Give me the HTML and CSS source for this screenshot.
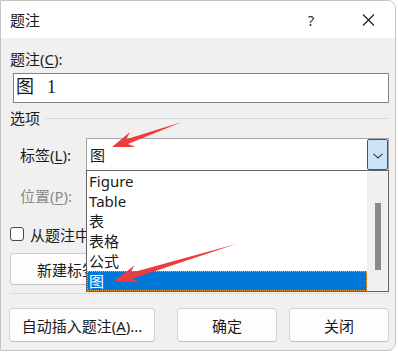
FILE: index.html
```html
<!DOCTYPE html>
<html lang="zh-CN">
<head>
    <meta charset="UTF-8">
    <meta name="viewport" content="width=device-width, initial-scale=1.0">
    <title>题注</title>
    <link rel="stylesheet" href="styles.css">
</head>
<body>
    <div class="window">
        <div class="titlebar">
            <span class="title">题注</span>
            <span class="title-btn help">?</span>
            <span class="title-btn close">
                <svg width="13" height="12" viewBox="0 0 13 12">
                    <path d="M1 0.5 L12 11.5 M12 0.5 L1 11.5" stroke="#1a1a1a" stroke-width="1.1" fill="none"/>
                </svg>
            </span>
        </div>

        <div class="dialog-body">
            <div class="field-label">题注(<u>C</u>):</div>
            <div class="caption-input">图<span class="caption-num">1</span></div>

            <div class="group-head">选项</div>

            <div class="opt-row">
                <span class="opt-label">标签(<u>L</u>):</span>
                <div class="combo">
                    <span class="combo-value">图</span>
                    <span class="combo-btn">
                        <svg width="10" height="6" viewBox="0 0 10 6">
                            <path d="M0.5 0.8 L5 5 L9.5 0.8" stroke="#3c3c3c" stroke-width="1.1" fill="none"/>
                        </svg>
                    </span>
                </div>
            </div>

            <div class="opt-row opt-row-pos">
                <span class="opt-label disabled">位置(<u>P</u>):</span>
                <div class="combo combo-disabled"></div>
            </div>

            <label class="check-row">
                <span class="checkbox"></span>
                <span>从题注中</span>
            </label>

            <div class="tool-row">
                <button class="btn btn-new">新建标签</button>
            </div>

            <div class="separator"></div>

            <div class="action-row">
                <button class="btn btn-auto">自动插入题注(<u>A</u>)...</button>
                <button class="btn btn-ok">确定</button>
                <button class="btn btn-close">关闭</button>
            </div>
        </div>

        <!-- open dropdown of the label combo -->
        <div class="dropdown">
            <ul class="dropdown-items">
                <li>Figure</li>
                <li>Table</li>
                <li>表</li>
                <li>表格</li>
                <li>公式</li>
                <li class="selected">图</li>
            </ul>
            <div class="scroll-track"><div class="scroll-thumb"></div></div>
        </div>

        <!-- red annotation arrows -->
        <svg class="marks" width="398" height="353" viewBox="0 0 398 353">
            <polygon points="182,122 127.9,144.0 135.4,147.1 112,147 130.0,132.1 126.3,139.2" fill="#ef3b3b"/>
            <polygon points="236,244 132.1,278.7 139.6,282.6 114,281 134.4,265.4 130.3,272.9" fill="#ef3b3b"/>
        </svg>
    </div>
</body>
</html>
```

FILE: styles.css
```css
body {
    margin: 0;
    padding: 0;
    background-color: #ffffff;
    font-family: "Noto Sans", "Noto Sans CJK SC", sans-serif;
    font-size: 15px;
    color: #1a1a1a;
}

u {
    text-decoration-thickness: 1px;
    text-underline-offset: 2px;
}

.window {
    position: relative;
    width: 396px;
    height: 351px;
    box-sizing: border-box;
    border: 1px solid #c4c4c4;
    border-radius: 0 8px 8px 0;
    background-color: #f0f0f0;
    overflow: hidden;
}

.titlebar {
    display: flex;
    align-items: center;
    height: 37px;
    background-color: #ffffff;
    padding-left: 9px;
}

.title {
    flex: 1;
    line-height: 20px;
}

.title-btn {
    display: flex;
    align-items: center;
    justify-content: center;
    width: 46px;
    height: 37px;
}

.help {
    font-size: 15px;
    color: #333;
    margin-right: 11px;
}

.close {
    margin-right: 4px;
}

.dialog-body {
    padding-left: 9px;
}

.field-label {
    margin-top: 11px;
    height: 20px;
    line-height: 20px;
}

.caption-input {
    margin: 4px 0 0 3px;
    width: 376px;
    height: 30px;
    box-sizing: border-box;
    border: 1px solid #858585;
    background-color: #fff;
    padding-left: 2px;
    font-family: "Liberation Serif", "Noto Sans CJK SC", serif;
    font-size: 18px;
    line-height: 27px;
}

.caption-num {
    margin-left: 13px;
}

.group-head {
    display: flex;
    align-items: center;
    margin-top: 5px;
    height: 20px;
    line-height: 20px;
}

.group-head::after {
    content: "";
    flex: 1;
    height: 1px;
    background-color: #d9d9d9;
    margin-left: 5px;
    margin-right: 6px;
}

.opt-row {
    display: flex;
    align-items: center;
    margin-top: 10px;
    height: 33px;
}

.opt-row-pos {
    margin-top: 8px;
    height: 32px;
}

.opt-label {
    width: 66px;
    padding-left: 10px;
}

.opt-label.disabled {
    color: #8a8a8a;
}

.combo {
    display: flex;
    align-items: stretch;
    width: 303px;
    height: 100%;
    box-sizing: border-box;
    border: 1px solid #a5a5a5;
    background-color: #fff;
}

.combo-disabled {
    background-color: #f0f0f0;
    border-color: #cfcfcf;
}

.combo-value {
    flex: 1;
    padding-left: 3px;
    display: flex;
    align-items: center;
}

.combo-btn {
    display: flex;
    align-items: center;
    justify-content: center;
    width: 21px;
    box-sizing: border-box;
    border: 1px solid #1560a8;
    border-radius: 2px;
    background-color: #cce4f7;
    padding-top: 2px;
}

.check-row {
    display: flex;
    align-items: center;
    margin-top: 13px;
    height: 20px;
}

.checkbox {
    width: 14px;
    height: 14px;
    box-sizing: border-box;
    border: 1px solid #4a4a4a;
    border-radius: 3px;
    background-color: #fff;
    margin-right: 6px;
}

.tool-row {
    display: flex;
    gap: 10px;
    margin-top: 9px;
    height: 32px;
}

.btn {
    height: 100%;
    box-sizing: border-box;
    border: 1px solid #d0d0d0;
    border-bottom-color: #bfbfbf;
    border-radius: 4px;
    background-color: #fdfdfd;
    font-family: "Noto Sans", "Noto Sans CJK SC", sans-serif;
    font-size: 15px;
    color: #1a1a1a;
    padding: 0;
    white-space: nowrap;
}

.btn-new {
    width: 145px;
    text-align: left;
    padding-left: 26px;
}

.separator {
    margin-top: 8px;
    margin-right: 6px;
    height: 1px;
    background-color: #dadada;
}

.action-row {
    display: flex;
    margin-top: 14px;
    margin-left: -1px;
    height: 34px;
}

.btn-auto {
    width: 146px;
}

.btn-ok {
    width: 100px;
    margin-left: 22px;
}

.btn-close {
    width: 100px;
    margin-left: 12px;
}

.dropdown {
    position: absolute;
    left: 85px;
    top: 169px;
    width: 303px;
    height: 122px;
    box-sizing: border-box;
    border: 1px solid #646464;
    background-color: #fff;
    display: flex;
}

.dropdown-items {
    list-style: none;
    margin: 0;
    padding: 0;
    width: 280px;
}

.dropdown-items li {
    height: 20px;
    line-height: 20px;
    padding-left: 2px;
    box-sizing: border-box;
}

.dropdown-items li.selected {
    background-color: #0078d7;
    color: #fff;
    border: 1px dotted #f0a040;
    padding-left: 1px;
    line-height: 18px;
}

.scroll-track {
    flex: 1;
    background-color: #f0f0f0;
    padding: 32px 0 0 8px;
}

.scroll-thumb {
    width: 6px;
    height: 67px;
    background-color: #8a8a8a;
}

.marks {
    position: absolute;
    left: -1px;
    top: -1px;
    pointer-events: none;
}
```
